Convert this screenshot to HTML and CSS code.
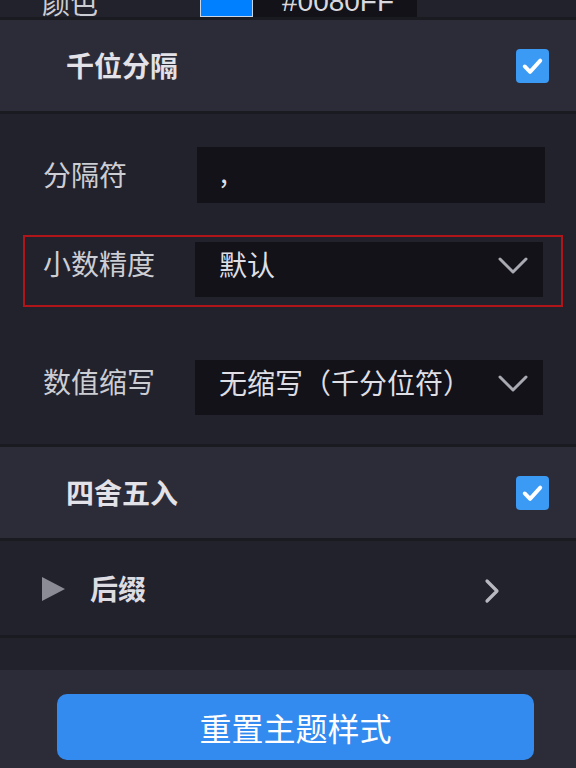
FILE: index.html
```html
<!DOCTYPE html>
<html lang="zh-CN">
<head>
<meta charset="utf-8">
<title>主题样式</title>
<link rel="stylesheet" href="styles.css">
</head>
<body>
<div class="panel">
  <div class="top-row">
    <div class="top-inner">
      <span class="top-label">颜色</span>
      <span class="swatch"></span>
      <span class="hex">#0080FF</span>
    </div>
  </div>
  <div class="divider"></div>
  <div class="section-head">
    <span class="head-title">千位分隔</span>
    <span class="checkbox"><svg viewBox="0 0 34 34" width="33" height="34"><path d="M9 17.5 L14.5 23 L25 11.5" fill="none" stroke="#fff" stroke-width="4" stroke-linecap="round" stroke-linejoin="round"/></svg></span>
  </div>
  <div class="divider"></div>
  <div class="form">
    <div class="field">
      <span class="label">分隔符</span>
      <div class="control input shift"><span class="comma">,</span></div>
    </div>
    <div class="field highlight">
      <span class="label raised">小数精度</span>
      <div class="control select">
        <span class="value">默认</span>
        <svg class="caret" viewBox="0 0 30 18" width="30" height="18"><path d="M2 2 L15 15 L28 2" fill="none" stroke="#a9a9b2" stroke-width="3" stroke-linecap="round" stroke-linejoin="round"/></svg>
      </div>
    </div>
    <div class="field third">
      <span class="label raised">数值缩写</span>
      <div class="control select">
        <span class="value">无缩写（千分位符）</span>
        <svg class="caret" viewBox="0 0 30 18" width="30" height="18"><path d="M2 2 L15 15 L28 2" fill="none" stroke="#a9a9b2" stroke-width="3" stroke-linecap="round" stroke-linejoin="round"/></svg>
      </div>
    </div>
  </div>
  <div class="divider"></div>
  <div class="section-head">
    <span class="head-title">四舍五入</span>
    <span class="checkbox"><svg viewBox="0 0 34 34" width="33" height="34"><path d="M9 17.5 L14.5 23 L25 11.5" fill="none" stroke="#fff" stroke-width="4" stroke-linecap="round" stroke-linejoin="round"/></svg></span>
  </div>
  <div class="divider"></div>
  <div class="collapse-row">
    <svg class="tri" viewBox="0 0 23 24" width="23" height="24"><path d="M0 0 L23 12 L0 24 Z" fill="#8a8b94"/></svg>
    <span class="collapse-title">后缀</span>
    <svg class="chev" viewBox="0 0 16 26" width="16" height="26"><path d="M3 3 L13 13 L3 23" fill="none" stroke="#b8b8c0" stroke-width="3.2" stroke-linecap="round" stroke-linejoin="round"/></svg>
  </div>
  <div class="divider"></div>
  <div class="band"></div>
  <div class="footer">
    <button class="reset-btn">重置主题样式</button>
  </div>
</div>
</body>
</html>
```
FILE: styles.css
```css
html, body {
  margin: 0;
  padding: 0;
  background: #22222c;
}
body {
  font-family: "Noto Sans CJK SC", "Noto Sans", sans-serif;
  color: #cfcfd6;
  width: 576px;
  height: 768px;
  overflow: hidden;
}
.panel {
  display: flex;
  flex-direction: column;
}
.top-row {
  height: 17px;
  overflow: hidden;
  background: #22222c;
}
.top-inner {
  margin-top: -14px;
  height: 31px;
  display: flex;
  align-items: center;
  padding-left: 42px;
}
.top-label {
  width: 158px;
  flex: none;
  font-size: 28px;
  line-height: 1;
  color: #cdcdd4;
}
.swatch {
  width: 53px;
  height: 100%;
  box-sizing: border-box;
  background: #0080ff;
  border: 1px solid #c9d4e4;
  border-top: none;
}
.hex {
  width: 164px;
  height: 100%;
  background: #121218;
  box-sizing: border-box;
  padding-left: 29px;
  display: flex;
  align-items: center;
  font-family: "Liberation Sans", Arial, sans-serif;
  font-size: 28px;
  color: #d8d8de;
}
.divider {
  height: 3px;
  background: #1a1a21;
}
.section-head {
  height: 91px;
  background: #2c2c38;
  display: flex;
  align-items: center;
  justify-content: space-between;
  padding: 0 27px 0 66px;
}
.head-title {
  font-size: 28px;
  font-weight: 700;
  color: #e2e2e8;
  line-height: 1;
  margin-bottom: 2px;
}
.checkbox {
  width: 33px;
  height: 34px;
  border-radius: 4px;
  background: #3a9af4;
  display: flex;
}
.form {
  display: flex;
  flex-direction: column;
  padding: 26px 0 19px 23px;
}
.field {
  width: 540px;
  box-sizing: border-box;
  border: 2px solid transparent;
  padding: 5px 18px 8px 18px;
  display: flex;
  align-items: center;
}
.field.highlight {
  border-color: #b0151a;
  margin-top: 22px;
}
.field.third {
  margin-top: 46px;
}
.label {
  font-size: 28px;
  color: #cdcdd4;
  width: 152px;
  flex: none;
  line-height: 1;
  margin-bottom: 3px;
}
.label.raised {
  margin-bottom: 13px;
}
.control {
  flex: 1;
  height: 55px;
  background: #121218;
  box-sizing: border-box;
  padding-left: 24px;
  display: flex;
  align-items: center;
  font-size: 28px;
  color: #dedee4;
}
.control.input {
  height: 56px;
}
.control.shift {
  margin-left: 2px;
  margin-right: -2px;
  padding-left: 23px;
}
.comma {
  line-height: 1;
  margin-bottom: 8px;
}
.value {
  line-height: 1;
  margin-bottom: 11px;
}
.select {
  justify-content: space-between;
  padding-right: 15px;
}
.caret {
  margin-bottom: 7px;
}
.collapse-row {
  height: 94px;
  display: flex;
  align-items: center;
  padding-left: 42px;
}
.tri {
  margin-top: 2px;
}
.collapse-title {
  margin-left: 25px;
  font-size: 28px;
  font-weight: 700;
  color: #dcdce2;
  line-height: 1;
}
.chev {
  margin-left: auto;
  margin-right: 76px;
  margin-top: 6px;
}
.band {
  height: 32px;
  background: #22222c;
}
.footer {
  height: 98px;
  background: #2c2c38;
  box-sizing: border-box;
  padding: 24px 42px 0 57px;
}
.reset-btn {
  display: block;
  width: 477px;
  height: 66px;
  border: none;
  border-radius: 10px;
  background: #338bef;
  color: #ffffff;
  font-family: "Noto Sans CJK SC", "Noto Sans", sans-serif;
  font-size: 32px;
  padding: 0;
}
```
